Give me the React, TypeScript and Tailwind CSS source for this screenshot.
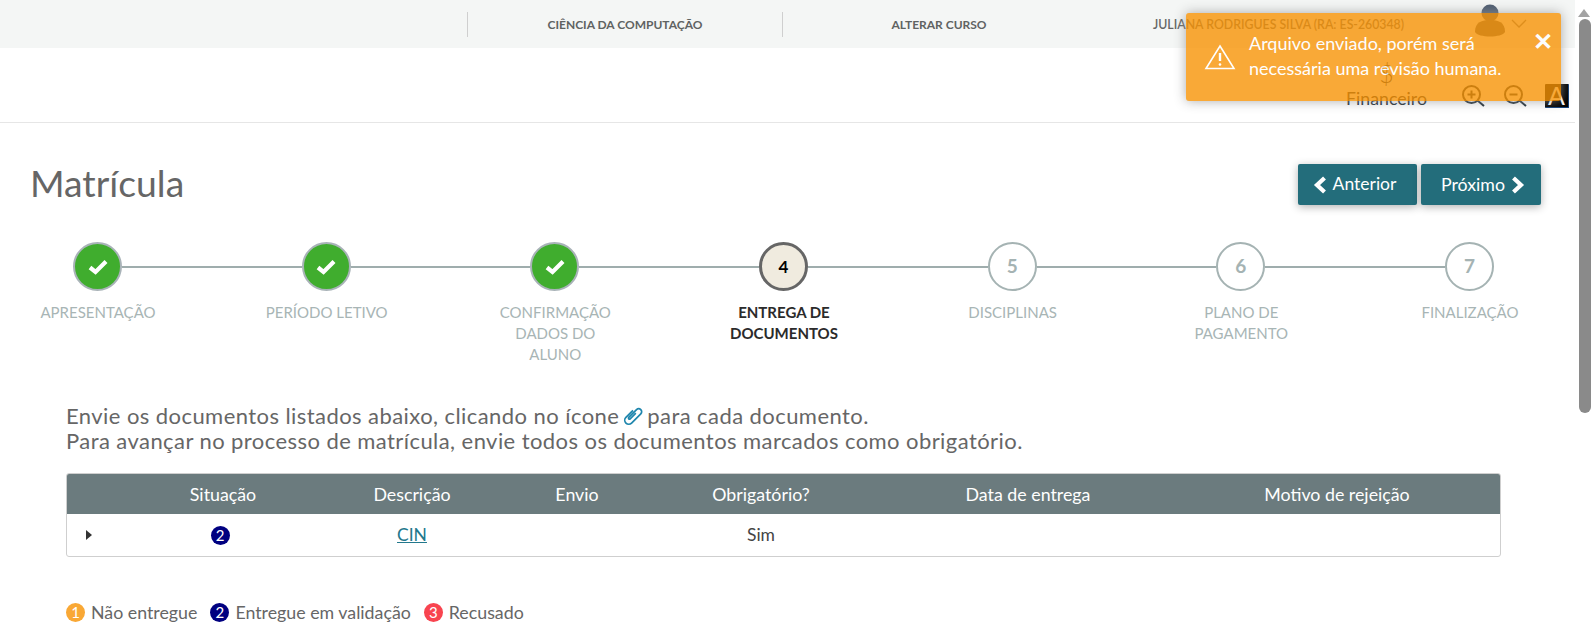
import React from "react";

const font = { fontFamily: "Lato, 'Noto Sans', sans-serif" };

function Chevron({ dir }: { dir: "left" | "right" }) {
  return (
    <svg width="14" height="18" viewBox="0 0 14 18" className="shrink-0">
      <polyline
        points={dir === "left" ? "11.5,2 4,9 11.5,16" : "2.5,2 10,9 2.5,16"}
        fill="none"
        stroke="#fff"
        strokeWidth="4.2"
      />
    </svg>
  );
}

function Check() {
  return (
    <svg width="20" height="16" viewBox="0 0 20 16">
      <polyline points="2,8.5 7.5,13 18,2.5" fill="none" stroke="#fff" strokeWidth="4.2" />
    </svg>
  );
}

function ZoomIcon({ plus }: { plus: boolean }) {
  return (
    <svg width="24" height="24" viewBox="0 0 24 24" fill="none" stroke="#1d2b36" strokeWidth="2">
      <circle cx="10.5" cy="10.5" r="8.5" />
      <line x1="16.5" y1="16.5" x2="23" y2="22" />
      <line x1="6.5" y1="10.5" x2="14.5" y2="10.5" />
      {plus && <line x1="10.5" y1="6.5" x2="10.5" y2="14.5" />}
    </svg>
  );
}

function Dot({ n, color }: { n: number; color: string }) {
  return (
    <span
      className={`h-[19px] w-[19px] ${color} inline-flex shrink-0 items-center justify-center rounded-full text-[15px] leading-none text-white`}
    >
      {n}
    </span>
  );
}

const steps = [
  { label: ["APRESENTAÇÃO"], state: "done" },
  { label: ["PERÍODO LETIVO"], state: "done" },
  { label: ["CONFIRMAÇÃO", "DADOS DO", "ALUNO"], state: "done" },
  { label: ["ENTREGA DE", "DOCUMENTOS"], state: "current" },
  { label: ["DISCIPLINAS"], state: "todo" },
  { label: ["PLANO DE", "PAGAMENTO"], state: "todo" },
  { label: ["FINALIZAÇÃO"], state: "todo" },
];

function Circle({ state, n }: { state: string; n: number }) {
  if (state === "done")
    return (
      <div className="flex h-[49px] w-[49px] shrink-0 items-center justify-center rounded-full border-2 border-[#a9b3b8] bg-[#40ad2e]">
        <Check />
      </div>
    );
  if (state === "current")
    return (
      <div className="flex h-[49px] w-[49px] shrink-0 items-center justify-center rounded-full border-[3px] border-[#666666] bg-[#f0ebdf] text-[17px] font-bold text-black">
        {n}
      </div>
    );
  return (
    <div className="flex h-[49px] w-[49px] shrink-0 items-center justify-center rounded-full border-2 border-[#a5b3b3] bg-white text-[19px] font-bold text-[#a5b3b3]">
      {n}
    </div>
  );
}

export default function App() {
  return (
    <div className="relative flex h-[639px] w-[1592px] overflow-hidden bg-white text-[#666666]" style={font}>
      <main className="w-[1575px] shrink-0">
        <div className="flex h-[48px] items-center bg-[#f4f6f5] text-[12px] font-bold text-[#5f6362]">
          <div className="ml-[467px] h-[25px] w-px bg-[#cfcfcf]" />
          <div className="w-[314px] pt-[2px] text-center">CIÊNCIA DA COMPUTAÇÃO</div>
          <div className="h-[25px] w-px bg-[#cfcfcf]" />
          <div className="w-[312px] pt-[2px] text-center">ALTERAR CURSO</div>
          <div className="ml-[58px] w-[262px] whitespace-nowrap pt-[2px] text-[12.3px] font-semibold text-[#666666]">
            JULIANA RODRIGUES SILVA (RA: ES-260348)
          </div>
          <svg width="36" height="36" viewBox="0 0 36 36" className="ml-[57px] mt-[-8px]">
            <circle cx="18" cy="11" r="8.5" fill="#4d5c70" />
            <path d="M3 30 C3 20 10 18 18 18 C26 18 33 20 33 30 C30 36 6 36 3 30 Z" fill="#5d5d5d" />
          </svg>
          <svg width="16" height="10" viewBox="0 0 16 10" className="ml-[3px]">
            <polyline points="1,1 8,8 15,1" fill="none" stroke="#777" strokeWidth="1.3" />
          </svg>
        </div>

        <div className="flex h-[75px] items-end justify-end border-b border-[#e6e6e6] pb-[12px] pr-[6px]">
          <div className="mr-[34px] flex flex-col items-center text-[#1d2b36]">
            <span className="mb-[2px] text-[25px] font-light leading-[22px]">$</span>
            <span className="text-[17.75px] leading-[24px]">Financeiro</span>
          </div>
          <div className="mb-[2px] mr-[18px]"><ZoomIcon plus /></div>
          <div className="mb-[2px] mr-[18px]"><ZoomIcon plus={false} /></div>
          <div className="mb-[2px] flex h-[24px] w-[24px] items-center justify-center rounded-[1px] border-b border-r border-[#12407a] bg-black text-[25px] font-normal leading-none text-white">
            A
          </div>
        </div>

        <div className="flex items-center justify-between pl-[30px] pr-[34px] pt-[41px]">
          <h1 className="mb-[4px] text-[37.3px] font-normal leading-[36px] text-[#666666]">Matrícula</h1>
          <div className="flex gap-[4px]">
            <button className="flex h-[41px] w-[119px] items-center justify-center gap-[6px] rounded-[2px] bg-[#236d7b] pr-[6px] text-[17.5px] text-white shadow-[0_2px_8px_rgba(0,0,0,0.3)]">
              <Chevron dir="left" />
              Anterior
            </button>
            <button className="flex h-[41px] w-[120px] items-center justify-center gap-[6px] rounded-[2px] bg-[#236d7b] pl-[4px] text-[17.75px] text-white shadow-[0_2px_8px_rgba(0,0,0,0.3)]">
              Próximo
              <Chevron dir="right" />
            </button>
          </div>
        </div>

        <div className="flex items-center pl-[73px] pr-[81px] pt-[37px]">
          {steps.map((s, i) => (
            <React.Fragment key={i}>
              <Circle state={s.state} n={i + 1} />
              {i < 6 && <div className="h-[2px] flex-1 bg-[#9fadad]" />}
            </React.Fragment>
          ))}
        </div>

        <div className="flex h-[78px] justify-between pl-[33px] pr-[40px] pt-[11px]">
          {steps.map((s, i) => (
            <div
              key={i}
              className={`w-[130px] text-center text-[15px] leading-[21px] ${
                s.state === "current" ? "font-bold text-[#2b2b2b]" : "text-[#a8b5b5]"
              }`}
            >
              {s.label.map((l) => (
                <div key={l}>{l}</div>
              ))}
            </div>
          ))}
        </div>

        <div className="pl-[66px] pr-[74px] pt-[34px]">
          <p className="text-[22px] leading-[25px] tracking-[0.43px] text-[#666666]">
            Envie os documentos listados abaixo, clicando no ícone
            <svg width="24" height="24" viewBox="0 0 24 24" className="mx-[2px] inline-block align-[-4px]" fill="none" stroke="#1f86ad" strokeWidth="1.7">
              <g transform="rotate(45 12 12)">
                <path d="M8 8 V18 a4 4 0 0 0 8 0 V5 a3 3 0 0 0 -6 0 V16 a1 1 0 0 0 2 0 V8" />
              </g>
            </svg>
            para cada documento.
            <br />
            Para avançar no processo de matrícula, envie todos os documentos marcados como obrigatório.
          </p>

          <div className="mt-[20px] overflow-hidden rounded-[3px] border border-[#cfcfcf]">
            <div className="grid h-[40px] grid-cols-[69px_174px_204px_126px_242px_292px_1fr] items-center bg-[#6b7b7e] text-center text-[17.8px] text-white">
              <div />
              <div>Situação</div>
              <div>Descrição</div>
              <div>Envio</div>
              <div>Obrigatório?</div>
              <div>Data de entrega</div>
              <div>Motivo de rejeição</div>
            </div>
            <div className="grid h-[42px] grid-cols-[69px_174px_204px_126px_242px_292px_1fr] items-center text-center text-[17.5px]">
              <div className="flex pl-[19px]">
                <span className="h-0 w-0 border-y-[5px] border-l-[6px] border-y-transparent border-l-[#333333]" />
              </div>
              <div className="flex justify-center pr-[6px]"><Dot n={2} color="bg-[#000080]" /></div>
              <div className="text-[#23788c] underline">CIN</div>
              <div />
              <div className="text-[#444444]">Sim</div>
              <div />
              <div />
            </div>
          </div>

          <div className="mt-[42px] flex items-center text-[17.8px]">
            <Dot n={1} color="bg-[#f9a835]" />
            <span className="ml-[6px] mr-[13px]">Não entregue</span>
            <Dot n={2} color="bg-[#000080]" />
            <span className="ml-[6px] mr-[13px]">Entregue em validação</span>
            <Dot n={3} color="bg-[#f8444f]" />
            <span className="ml-[6px]">Recusado</span>
          </div>
        </div>
      </main>

      <aside className="flex w-[17px] shrink-0 flex-col items-center bg-white">
        <span className="mt-[9px] h-0 w-0 border-x-[6px] border-b-[8px] border-x-transparent border-b-[#a3a3a3]" />
        <div className="ml-[3px] mt-[2px] h-[394px] w-[12px] rounded-[6px] bg-[#8a8a8a]" />
      </aside>

      <div className="absolute left-[1186px] top-[13px] flex h-[88px] w-[375px] rounded-[3px] bg-[#f89406] text-white opacity-80 shadow-[0_0_12px_#999999]">
        <svg width="32" height="26" viewBox="0 0 32 26" className="ml-[18px] mt-[31px]" fill="none" stroke="#fff" strokeWidth="1.6">
          <path d="M16 2 L30 24.5 H2 Z" />
          <line x1="16" y1="9" x2="16" y2="17" strokeWidth="2.4" />
          <circle cx="16" cy="20.5" r="1.3" fill="#fff" stroke="none" />
        </svg>
        <div className="ml-[13px] mt-[18px] w-[275px] text-[18px] leading-[25px]">
          Arquivo enviado, porém será necessária uma revisão humana.
        </div>
        <span className="absolute right-[8px] top-[16px] text-[24px] font-black leading-none">✕</span>
      </div>
    </div>
  );
}
